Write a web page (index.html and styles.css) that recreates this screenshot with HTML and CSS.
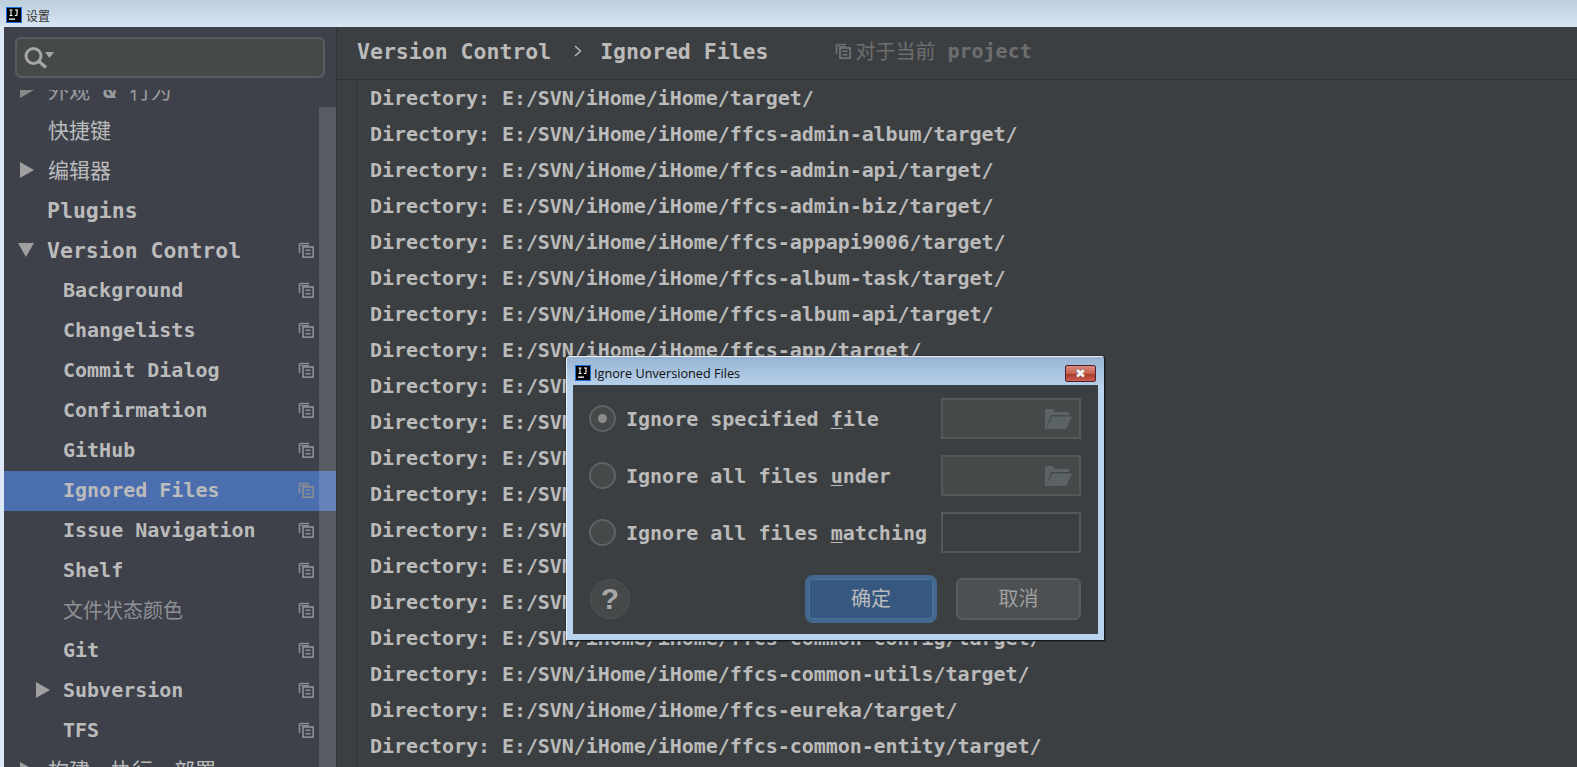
FILE: index.html
```html
<!DOCTYPE html>
<html lang="zh">
<head>
<meta charset="utf-8">
<title>设置</title>
<link rel="stylesheet" href="styles.css">
</head>
<body>
<svg class="defs" width="0" height="0">
  <defs>
    <symbol id="copy" viewBox="0 0 16 16">
      <path d="M11 1.500H2.500a1 1 0 0 0-1 1V11" fill="none" stroke="currentColor" stroke-width="1.700"/>
      <rect x="5" y="5" width="10.200" height="10.200" fill="none" stroke="currentColor" stroke-width="1.800"/>
      <path d="M7.500 8.300h5M7.500 11.800h5" stroke="currentColor" stroke-width="1.500"/>
      <path d="M3 3.500h8" stroke="currentColor" stroke-width="1"/>
    </symbol>
    <symbol id="ij" viewBox="0 0 16 16">
      <rect x=".5" y=".5" width="15" height="15" fill="#000" stroke="#1e6fd9"/>
      <rect x="3" y="11.500" width="6" height="1.300" fill="#fff"/>
      <path d="M3.500 3h3M5 3v5.500M3.500 8.500h3M9 3h3M11 3v4.500a1 1 0 0 1-1 1H8.800" fill="none" stroke="#fff" stroke-width="1.100"/>
    </symbol>
    <symbol id="folder" viewBox="0 0 27 20">
      <path d="M0 20V1l1-1h7l2 3h14v3H6L1 20z" fill="#5c6365"/>
      <path d="M7 7.500h20L21 20H1z" fill="#5c6365"/>
    </symbol>
  </defs>
</svg>

<header class="titlebar">
  <svg class="ij-icon"><use href="#ij"/></svg>
  <span class="titlebar-text">设置</span>
</header>

<div class="window">
  <aside class="sidebar">
    <div class="search-wrap">
      <div class="search">
        <svg class="search-icon" viewBox="0 0 32 24">
          <circle cx="9.500" cy="9" r="7.500" fill="none" stroke="#a6a6a6" stroke-width="3"/>
          <path d="M15 14.500l7 6" stroke="#a6a6a6" stroke-width="3.400"/>
          <path d="M21 5h9l-4.500 6z" fill="#a6a6a6"/>
        </svg>
      </div>
    </div>
    <div class="tree-view">
      <ul class="tree">
        <li class="row lv0 faint"><i class="arrow right"></i><span class="mixed"><span class="cjk">外观</span> &amp; <span class="cjk">行为</span></span></li>
        <li class="row lv0"><span class="cjk">快捷键</span></li>
        <li class="row lv0"><i class="arrow right"></i><span class="cjk">编辑器</span></li>
        <li class="row lv0"><span>Plugins</span></li>
        <li class="row lv0"><i class="arrow down"></i><span>Version Control</span><svg class="copy"><use href="#copy"/></svg></li>
        <li class="row lv1"><span>Background</span><svg class="copy"><use href="#copy"/></svg></li>
        <li class="row lv1"><span>Changelists</span><svg class="copy"><use href="#copy"/></svg></li>
        <li class="row lv1"><span>Commit Dialog</span><svg class="copy"><use href="#copy"/></svg></li>
        <li class="row lv1"><span>Confirmation</span><svg class="copy"><use href="#copy"/></svg></li>
        <li class="row lv1"><span>GitHub</span><svg class="copy"><use href="#copy"/></svg></li>
        <li class="row lv1 selected"><span>Ignored Files</span><svg class="copy"><use href="#copy"/></svg></li>
        <li class="row lv1"><span>Issue Navigation</span><svg class="copy"><use href="#copy"/></svg></li>
        <li class="row lv1"><span>Shelf</span><svg class="copy"><use href="#copy"/></svg></li>
        <li class="row lv1"><span class="cjk dim">文件状态颜色</span><svg class="copy"><use href="#copy"/></svg></li>
        <li class="row lv1"><span>Git</span><svg class="copy"><use href="#copy"/></svg></li>
        <li class="row lv1"><i class="arrow right"></i><span>Subversion</span><svg class="copy"><use href="#copy"/></svg></li>
        <li class="row lv1"><span>TFS</span><svg class="copy"><use href="#copy"/></svg></li>
        <li class="row lv0"><i class="arrow right"></i><span class="cjk">构建，执行，部署</span></li>
      </ul>
      <div class="scrollbar"></div>
    </div>
  </aside>

  <main class="content">
    <div class="breadcrumb">
      <span class="crumb">Version Control</span>
      <svg class="chevron" viewBox="0 0 10 14"><path d="M2 2l5.500 5L2 12" fill="none" stroke="#bbb" stroke-width="1.400"/></svg>
      <span class="crumb">Ignored Files</span>
      <span class="scope">
        <svg class="copy scope-icon"><use href="#copy"/></svg>
        <span class="cjk scope-cjk">对于当前</span>
        <span class="scope-word">project</span>
      </span>
    </div>
    <ul class="files">
      <li>Directory: E:/SVN/iHome/iHome/target/</li>
      <li>Directory: E:/SVN/iHome/iHome/ffcs-admin-album/target/</li>
      <li>Directory: E:/SVN/iHome/iHome/ffcs-admin-api/target/</li>
      <li>Directory: E:/SVN/iHome/iHome/ffcs-admin-biz/target/</li>
      <li>Directory: E:/SVN/iHome/iHome/ffcs-appapi9006/target/</li>
      <li>Directory: E:/SVN/iHome/iHome/ffcs-album-task/target/</li>
      <li>Directory: E:/SVN/iHome/iHome/ffcs-album-api/target/</li>
      <li>Directory: E:/SVN/iHome/iHome/ffcs-app/target/</li>
      <li>Directory: E:/SVN/iHome/iHome/ffcs-auth/target/</li>
      <li>Directory: E:/SVN/iHome/iHome/ffcs-base/target/</li>
      <li>Directory: E:/SVN/iHome/iHome/ffcs-cache/target/</li>
      <li>Directory: E:/SVN/iHome/iHome/ffcs-client/target/</li>
      <li>Directory: E:/SVN/iHome/iHome/ffcs-cloud/target/</li>
      <li>Directory: E:/SVN/iHome/iHome/ffcs-common/target/</li>
      <li>Directory: E:/SVN/iHome/iHome/ffcs-common-db/target/</li>
      <li>Directory: E:/SVN/iHome/iHome/ffcs-common-config/target/</li>
      <li>Directory: E:/SVN/iHome/iHome/ffcs-common-utils/target/</li>
      <li>Directory: E:/SVN/iHome/iHome/ffcs-eureka/target/</li>
      <li>Directory: E:/SVN/iHome/iHome/ffcs-common-entity/target/</li>
    </ul>
  </main>
</div>

<section class="dialog">
  <div class="dialog-title">
    <svg class="ij-icon"><use href="#ij"/></svg>
    <span class="dialog-title-text">Ignore Unversioned Files</span>
    <div class="close"><span class="close-x">✖</span></div>
  </div>
  <div class="dialog-body">
    <div class="option">
      <span class="radio checked"></span>
      <span class="label">Ignore specified <u>f</u>ile</span>
      <div class="field disabled"><svg class="folder"><use href="#folder"/></svg></div>
    </div>
    <div class="option">
      <span class="radio"></span>
      <span class="label">Ignore all files <u>u</u>nder</span>
      <div class="field disabled"><svg class="folder"><use href="#folder"/></svg></div>
    </div>
    <div class="option">
      <span class="radio"></span>
      <span class="label">Ignore all files <u>m</u>atching</span>
      <div class="field"></div>
    </div>
    <div class="actions">
      <span class="help">?</span>
      <button class="btn primary">确定</button>
      <button class="btn secondary">取消</button>
    </div>
  </div>
</section>
</body>
</html>
```
FILE: styles.css
```css
* { box-sizing: border-box; }
html, body { margin: 0; padding: 0; height: 100%; overflow: hidden; }
body {
  width: 1577px; height: 767px;
  background: #dce8f5;
  font-family: "DejaVu Sans Mono", "Noto Sans CJK SC", monospace;
  font-weight: 700;
  font-size: 20px;
  color: #bbbbbb;
  display: flex;
  flex-direction: column;
}
ul { list-style: none; margin: 0; padding: 0; }
.defs { position: absolute; }

.titlebar {
  height: 27px;
  flex: none;
  background: linear-gradient(#bccddc, #d8e6f3);
  display: flex;
  align-items: center;
  padding: 3px 0 0 6px;
  gap: 4px;
}
.ij-icon { width: 16px; height: 16px; display: block; flex: none; }
.titlebar-text {
  font: 400 12px "Noto Sans CJK SC", sans-serif;
  color: #333;
}

.window { flex: 1; min-height: 0; display: flex; margin-left: 4px; }

.sidebar {
  width: 333px;
  flex: none;
  background: #3e414a;
  border-right: 1px solid #323232;
  display: flex;
  flex-direction: column;
  min-height: 0;
}
.search-wrap { height: 63px; flex: none; padding: 10px 11px 0; }
.search {
  height: 41px;
  width: 310px;
  background: #45494a;
  border: 2px solid #5a5d5f;
  border-radius: 6px;
  padding: 8px 0 0 7px;
}
.search-icon { width: 32px; height: 24px; display: block; }

.tree-view { position: relative; flex: 1; min-height: 0; overflow: hidden; }
.tree { margin-top: -19px; }
.row {
  height: 40px;
  padding-bottom: 2px;
  position: relative;
  display: flex;
  align-items: center;
  white-space: nowrap;
}
.lv0 { padding-left: 43px; font-size: 21.5px; }
.lv0 .cjk { font-size: 21px; margin-left: 1px; }
.row > .cjk, .row > .mixed { padding-bottom: 3px; }
.lv1 > .cjk { padding-bottom: 2px; }
.lv1 { padding-left: 59px; }
.row.selected { background: #4b6eaf; }
.cjk { font-family: "Noto Sans CJK SC", sans-serif; font-weight: 400; }
.dim { color: #8f9094; }
.faint { opacity: .75; }

.arrow { position: absolute; width: 0; height: 0; display: block; }
.arrow.right {
  border-left: 14px solid #a0a0a0;
  border-top: 8px solid transparent;
  border-bottom: 8px solid transparent;
  left: 16px;
}
.lv1 .arrow.right { left: 32px; }
.arrow.down {
  border-top: 14px solid #a0a0a0;
  border-left: 8px solid transparent;
  border-right: 8px solid transparent;
  left: 14px;
}
.copy { width: 16px; height: 16px; color: #858b91; display: block; }
.row .copy { position: absolute; left: 294px; top: 11px; }

.scrollbar {
  position: absolute;
  left: 315px; top: 17px; bottom: 0; width: 17px;
  background: rgba(255, 255, 255, .14);
}

.content { flex: 1; min-width: 0; background: #3c3f41; display: flex; flex-direction: column; }
.breadcrumb {
  height: 53px;
  flex: none;
  display: flex;
  align-items: center;
  padding: 0 0 4px 20px;
  white-space: nowrap;
  border-bottom: 1px solid #323232;
  font-size: 21.5px;
}
.chevron { width: 10px; height: 14px; margin: 0 17px 0 22px; flex: none; }
.scope { display: flex; align-items: center; margin-left: 67px; color: #6e6e6e; font-size: 20px; }
.scope-icon { color: #6e7275; margin-right: 4px; }
.scope-cjk { font-size: 20px; padding-bottom: 1px; }
.scope-word { margin-left: 12px; }

.files {
  flex: 1;
  min-height: 0;
  overflow: hidden;
  margin-left: 19px;
  border-left: 1px solid #323232;
  padding: 0 0 0 13px;
  letter-spacing: -.05px;
}
.files li { height: 36px; line-height: 36px; white-space: nowrap; }

.dialog {
  position: absolute;
  left: 566px; top: 356px;
  width: 539px; height: 285px;
  background: #b9d3ec;
  border: 1px solid #0f1a22;
  border-top-color: #e9f1f8;
  border-left-color: #e9f1f8;
  border-radius: 4px 4px 0 0;
  box-shadow: 0 0 0 1px rgba(0,0,0,.25);
  padding: 0 6px 6px;
  display: flex;
  flex-direction: column;
}
.dialog-title {
  height: 28px;
  flex: none;
  margin: 0 -6px;
  padding: 3px 8px 0;
  background: linear-gradient(#98b4d2, #b7d0e9);
  display: flex;
  align-items: center;
  gap: 3px;
  border-radius: 3px 3px 0 0;
}
.dialog-title-text { font: 400 12.7px "Open Sans", "Noto Sans", sans-serif; color: #111; flex: 1; white-space: nowrap; }
.close {
  width: 31px; height: 17px;
  flex: none;
  align-self: flex-start;
  margin-top: 5px;
  border: 1px solid #4a2030;
  border-radius: 2px;
  background: linear-gradient(#d98b7d 0, #c9604f 50%, #a93a2a 55%, #cb5f50 100%);
  display: flex;
  align-items: center;
  justify-content: center;
}
.close-x { color: #f3f3f3; font: 700 13px/15px "DejaVu Sans", sans-serif; text-shadow: 0 0 1px #333; }

.dialog-body {
  flex: 1;
  min-height: 0;
  background: #3c3f41;
  padding: 13px 17px 0 16px;
  display: flex;
  flex-direction: column;
}
.option { height: 41px; margin-bottom: 16px; display: flex; align-items: center; }
.radio {
  width: 27px; height: 27px;
  flex: none;
  border-radius: 50%;
  border: 2px solid #5f6264;
  background: #45494a;
  display: flex;
  align-items: center;
  justify-content: center;
}
.radio.checked::before {
  content: "";
  width: 9px; height: 9px;
  border-radius: 50%;
  background: #8c8c8c;
}
.label { margin-left: 10px; flex: 1; white-space: nowrap; }
.label u { text-underline-offset: 2px; text-decoration-thickness: 1px; }
.field {
  width: 140px; height: 41px;
  flex: none;
  border: 2px solid #555859;
  display: flex;
  align-items: center;
  justify-content: flex-end;
  padding-right: 7px;
}
.field.disabled { background: #45494a; }
.folder { width: 27px; height: 20px; display: block; }

.actions { display: flex; align-items: center; margin-top: 6px; height: 48px; }
.help {
  width: 40px; height: 40px;
  flex: none;
  margin-left: 1px;
  border-radius: 50%;
  background: #45494a;
  border: 1px solid #505354;
  color: #a8a8a8;
  font: 700 30px/38px "Liberation Sans", sans-serif;
  text-align: center;
}
.btn {
  font: 400 20px "Noto Sans CJK SC", sans-serif;
  color: #bbb;
  padding: 0 0 3px;
  flex: none;
}
.primary {
  width: 132px; height: 48px;
  margin-left: 175px;
  background: #365880;
  border: 4px solid #43688f;
  border-radius: 8px;
  box-shadow: inset 0 0 0 1px #4d749c;
}
.secondary {
  width: 125px; height: 42px;
  margin-left: 19px;
  background: #4c5052;
  border: 2px solid #5a5d5e;
  border-radius: 6px;
  color: #a0a0a0;
}
```
